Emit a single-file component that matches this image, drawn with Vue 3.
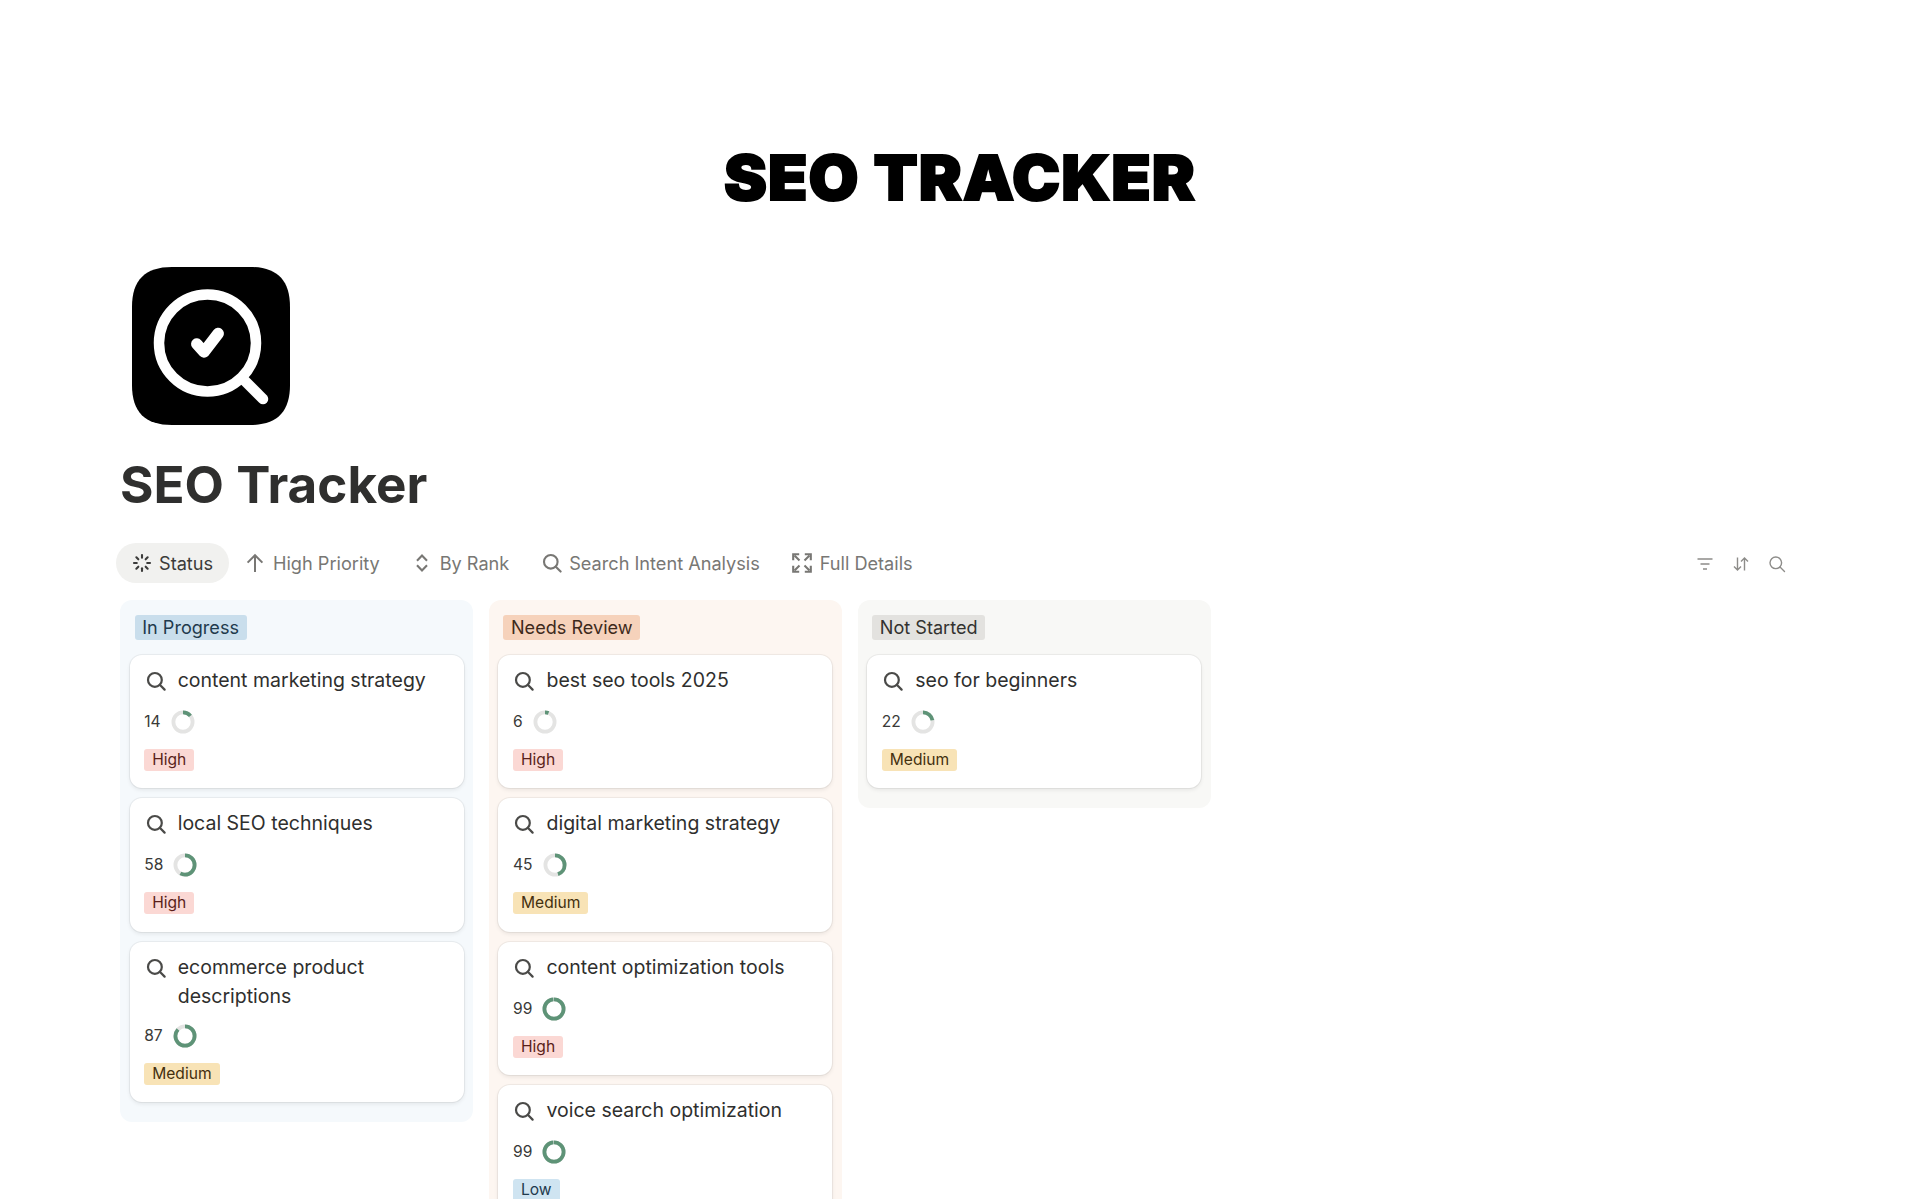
<script setup>
const tabs = [
  { label: 'Status', icon: 'loader', active: true },
  { label: 'High Priority', icon: 'up' },
  { label: 'By Rank', icon: 'updown' },
  { label: 'Search Intent Analysis', icon: 'search' },
  { label: 'Full Details', icon: 'expand' },
]

const columns = [
  {
    name: 'In Progress',
    tone: 'blue',
    cards: [
      { title: 'content marketing strategy', rank: 14, priority: 'High' },
      { title: 'local SEO techniques', rank: 58, priority: 'High' },
      { title: 'ecommerce product descriptions', rank: 87, priority: 'Medium' },
    ],
  },
  {
    name: 'Needs Review',
    tone: 'orange',
    cards: [
      { title: 'best seo tools 2025', rank: 6, priority: 'High' },
      { title: 'digital marketing strategy', rank: 45, priority: 'Medium' },
      { title: 'content optimization tools', rank: 99, priority: 'High' },
      { title: 'voice search optimization', rank: 99, priority: 'Low' },
    ],
  },
  {
    name: 'Not Started',
    tone: 'gray',
    cards: [{ title: 'seo for beginners', rank: 22, priority: 'Medium' }],
  },
]

const spokes = [0, 45, 90, 135, 180, 225, 270, 315]
</script>

<template>
  <div class="page">
    <header class="banner">SEO TRACKER</header>

    <main class="content">
      <svg class="logo" viewBox="0 0 158 158">
        <path
          d="M40 0H118C145 0 158 13 158 40V118C158 145 145 158 118 158H40C13 158 0 145 0 118V40C0 13 13 0 40 0Z"
          fill="#000"
        />
        <circle cx="75.5" cy="76" r="48.5" fill="none" stroke="#fff" stroke-width="10.5" />
        <path d="M111 112L131 132" stroke="#fff" stroke-width="10.5" stroke-linecap="round" />
        <path
          d="M64.8 77L72 85L86.2 66.5"
          fill="none"
          stroke="#fff"
          stroke-width="11.5"
          stroke-linecap="round"
          stroke-linejoin="round"
        />
      </svg>

      <h1 class="title">SEO Tracker</h1>

      <nav class="toolbar">
        <div class="tabs">
          <div v-for="tab in tabs" :key="tab.label" class="tab" :class="{ active: tab.active }">
            <svg class="tab-icon" viewBox="0 0 20 20" fill="none" stroke="currentColor">
              <g v-if="tab.icon === 'loader'" stroke-width="2.1" stroke-linecap="round">
                <path
                  v-for="a in spokes"
                  :key="a"
                  d="M10 2V4.8"
                  :transform="`rotate(${a} 10 10)`"
                />
              </g>
              <path
                v-else-if="tab.icon === 'up'"
                d="M10 19V2.5M2.6 9.6L10 2.2L17.4 9.6"
                stroke-width="2"
              />
              <path
                v-else-if="tab.icon === 'updown'"
                d="M5 7.8L10 2.6L15 7.8M5 12.2L10 17.4L15 12.2"
                stroke-width="2.1"
              />
              <g v-else-if="tab.icon === 'search'" stroke-width="2.1">
                <circle cx="8.8" cy="8.8" r="6.8" />
                <path d="M13.8 13.8L18.6 18.6" stroke-linecap="round" />
              </g>
              <g v-else stroke-width="2.1">
                <path d="M1.2 7.2V1.2H7.2M12.8 1.2H18.8V7.2M18.8 12.8V18.8H12.8M7.2 18.8H1.2V12.8" />
                <path d="M2.5 2.5L7.5 7.5M17.5 2.5L12.5 7.5M17.5 17.5L12.5 12.5M2.5 17.5L7.5 12.5" />
              </g>
            </svg>
            <span>{{ tab.label }}</span>
          </div>
        </div>

        <div class="actions">
          <svg viewBox="0 0 20 20" fill="none" stroke="currentColor" stroke-width="1.4">
            <path d="M2.5 5H17.5M5.5 10H14.5M8 15H12" />
          </svg>
          <svg viewBox="0 0 20 20" fill="none" stroke="currentColor" stroke-width="1.4">
            <path d="M6.5 3.5V16M3 12.5L6.5 16L10 12.5M13.5 16.5V4M10 7.5L13.5 4L17 7.5" />
          </svg>
          <svg viewBox="0 0 20 20" fill="none" stroke="currentColor" stroke-width="1.4">
            <circle cx="8.8" cy="8.8" r="5.8" />
            <path d="M13 13L17.5 17.5" stroke-linecap="round" />
          </svg>
        </div>
      </nav>

      <section class="board">
        <div v-for="col in columns" :key="col.name" class="column" :class="col.tone">
          <div class="column-head">
            <span class="column-tag">{{ col.name }}</span>
          </div>

          <article v-for="card in col.cards" :key="card.title" class="card">
            <div class="card-title">
              <svg class="card-icon" viewBox="0 0 20 20" fill="none" stroke="currentColor" stroke-width="2.2">
                <circle cx="8.9" cy="8.9" r="6.9" />
                <path d="M13.8 13.8L18.6 18.6" stroke-linecap="round" />
              </svg>
              <span>{{ card.title }}</span>
            </div>

            <div class="rank">
              <span class="rank-value">{{ card.rank }}</span>
              <svg class="ring" viewBox="0 0 24 24" fill="none" stroke-width="3.8">
                <circle cx="12" cy="12" r="9.6" stroke="#e4e4e3" />
                <circle
                  cx="12"
                  cy="12"
                  r="9.6"
                  stroke="#5e9377"
                  pathLength="100"
                  :stroke-dasharray="`${card.rank} 100`"
                  transform="rotate(-90 12 12)"
                />
              </svg>
            </div>

            <span class="priority" :class="card.priority.toLowerCase()">{{ card.priority }}</span>
          </article>
        </div>
      </section>
    </main>
  </div>
</template>

<style scoped>
.page {
  height: 1199px;
  overflow: hidden;
  background: #fff;
  font-family: Inter, "Liberation Sans", sans-serif;
  color: #2f2f2e;
}

.banner {
  padding-top: 139px;
  height: 128px;
  text-align: center;
  font-size: 62px;
  line-height: 78px;
  font-weight: 900;
  letter-spacing: 1px;
  color: #000;
  -webkit-text-stroke: 2px #000;
  transform: scaleX(1.04);
}

.content {
  padding: 0 133px 0 120px;
}

.logo {
  display: block;
  width: 158px;
  height: 158px;
  margin-left: 12px;
}

.title {
  margin: 29px 0 0;
  font-size: 51.2px;
  line-height: 60px;
  font-weight: 700;
  color: #2f2f2e;
}

.toolbar {
  display: flex;
  align-items: center;
  justify-content: space-between;
  margin: 29px 0 17px -4px;
}

.tabs {
  display: flex;
  gap: 1.4px;
}

.tab {
  display: flex;
  align-items: center;
  gap: 7.5px;
  height: 40px;
  padding: 0 15.5px;
  border-radius: 20px;
  font-size: 18.15px;
  font-weight: 430;
  color: #787774;
}

.tab.active {
  background: #f1f1ef;
  color: #3b3b3a;
}

.tab-icon {
  width: 20px;
  height: 20px;
  flex: none;
}

.actions {
  display: flex;
  gap: 16px;
  margin-top: 2px;
  color: #8d8c89;
}

.actions svg {
  width: 20px;
  height: 20px;
}

.board {
  display: flex;
  align-items: flex-start;
  gap: 15.5px;
}

.column {
  box-sizing: border-box;
  width: 353.3px;
  padding: 15px 9.7px 20px;
  border-radius: 12px;
  display: flex;
  flex-direction: column;
  gap: 10px;
}

.column.blue {
  background: #f5f9fc;
}

.column.orange {
  background: #fdf6f1;
}

.column.gray {
  background: #f8f8f6;
}

.column-head {
  display: flex;
  padding: 0 0 5px 5px;
}

.column-tag {
  height: 25px;
  padding: 0 7.5px;
  border-radius: 3px;
  font-size: 18.1px;
  font-weight: 430;
  line-height: 25px;
}

.blue .column-tag {
  background: #c9deec;
  color: #1f3a4d;
}

.orange .column-tag {
  background: #f6d2bb;
  color: #3e2a1c;
}

.gray .column-tag {
  background: #e3e2df;
  color: #33322f;
}

.card {
  background: #fff;
  border-radius: 12px;
  padding: 11px 14.5px 17.5px;
  box-shadow: 0 0 0 1px rgba(15, 15, 15, 0.05), 0 2px 4px rgba(15, 15, 15, 0.08);
}

.card-title {
  display: flex;
  align-items: flex-start;
  gap: 12px;
  min-height: 31.4px;
  font-size: 19.5px;
  font-weight: 430;
  line-height: 29px;
  color: #2f2f2e;
}

.card-icon {
  width: 20px;
  height: 20px;
  flex: none;
  margin-top: 5px;
  margin-left: 1.5px;
  color: #4a4a48;
}

.rank {
  display: flex;
  align-items: center;
  gap: 10px;
  height: 24px;
  margin-top: 12.6px;
  font-size: 15.6px;
  color: #3a3a38;
}

.rank-value {
  margin-bottom: 1px;
}

.ring {
  width: 24px;
  height: 24px;
}

.priority {
  display: inline-block;
  height: 22px;
  margin-top: 15px;
  padding: 0 8px;
  border-radius: 3px;
  font-size: 15.6px;
  line-height: 22px;
  vertical-align: top;
}

.priority.high {
  background: #fbd8d4;
  color: #5a1f1a;
}

.priority.medium {
  background: #f8e3b6;
  color: #44300f;
}

.priority.low {
  background: #cfe4f1;
  color: #1f3a4d;
}
</style>

<style>
html,
body {
  margin: 0;
  overflow: hidden;
}
</style>
